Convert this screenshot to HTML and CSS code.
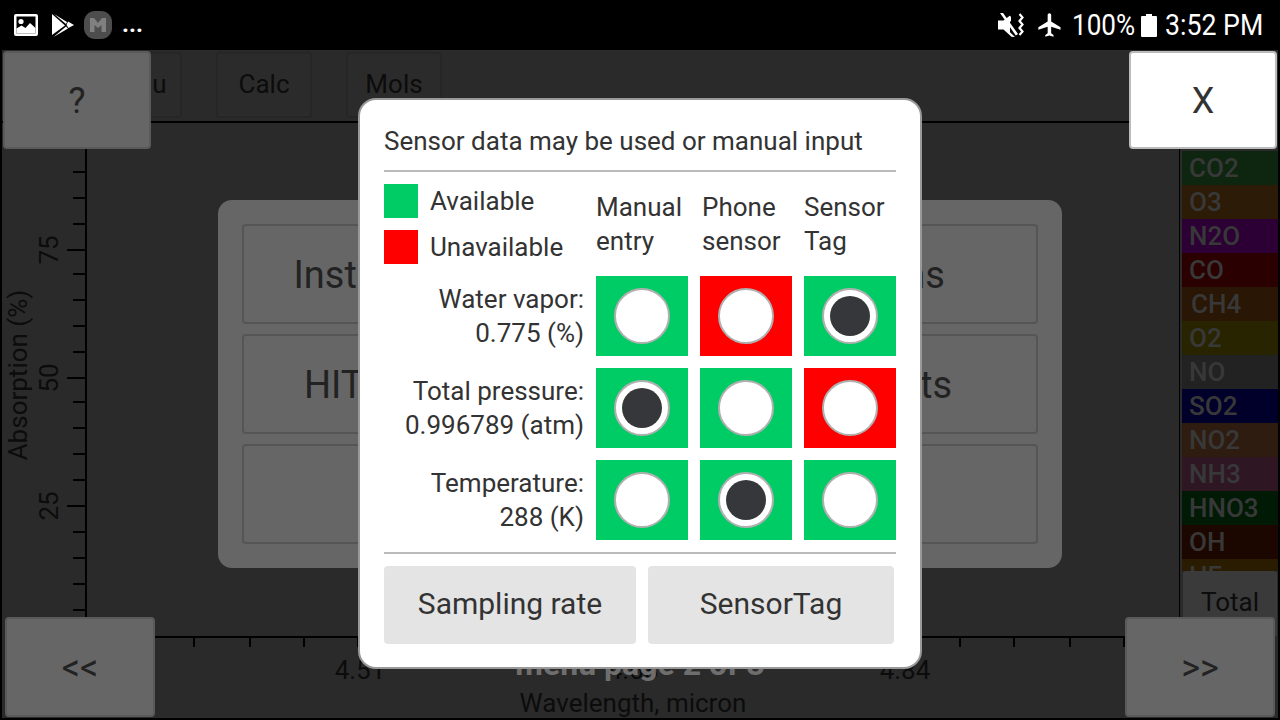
FILE: index.html
```html
<!DOCTYPE html>
<html lang="en">
<head>
    <meta charset="UTF-8">
    <title>Sensor settings</title>
    <link rel="stylesheet" href="styles.css">
</head>
<body>

<div class="screen">

    <!-- status bar -->
    <div class="statusbar">
        <div class="status-left">
            <svg class="icon-gallery" width="24" height="22" viewBox="0 0 24 22">
                <path fill="#fff" fill-rule="evenodd" d="M2 0h20a2 2 0 0 1 2 2v18a2 2 0 0 1-2 2H2a2 2 0 0 1-2-2V2a2 2 0 0 1 2-2zM2.500 2.500v17h19v-17z"/>
                <circle cx="7" cy="7.500" r="2.600" fill="#fff"/>
                <path fill="#fff" d="M2.500 18v-3.500l5-3 4 2.500 4.500-5 5.500 5V19.500h-19z"/>
            </svg>
            <svg class="icon-play" width="22" height="23" viewBox="0 0 22 23">
                <path fill="#fff" d="M0 0l13 11.500L0 21zM1.500 23L16 14.500l-2-2zM2 0l13 8-1 2zM16 7.500l6 3.500-5.500 3-2-3z"/>
            </svg>
            <div class="app-badge">
                <svg width="16" height="14" viewBox="0 0 16 14">
                    <path fill="#808080" d="M0 0h4l4 5 4-5h4v14h-4.500V7L8 10 4.500 7v7H0z"/>
                </svg>
            </div>
            <span class="more">...</span>
        </div>
        <div class="status-right">
            <svg class="icon-mute" width="28" height="24" viewBox="0 0 28 24">
                <path fill="#fff" d="M0 7.500h5.500L12 2.500v16.800l5 4.700-3.500-.2L5.500 16.500H0z"/>
                <path fill="#fff" d="M2 0l2-1.500L20 21l-2.200 1.500zM13 3v6l-3-3.500z"/>
                <path fill="none" stroke="#fff" stroke-width="2.200" d="M21.500 1l3 3.500-3 3.500 3 3.500-3 3.500 3 3.500-3 3.500"/>
            </svg>
            <svg class="icon-plane" width="28" height="28" viewBox="0 0 24 24">
                <path fill="#fff" d="M21 16v-2l-8-5V3.500c0-.83-.67-1.500-1.500-1.500S10 2.670 10 3.500V9l-8 5v2l8-2.500V19l-2 1.500V22l3.500-1 3.500 1v-1.500L13 19v-5.500l8 2.500z"/>
            </svg>
            <span class="pct">100%</span>
            <svg class="icon-battery" width="16" height="23" viewBox="0 0 16 23">
                <path fill="#fff" d="M5 0h6v2h4a1 1 0 0 1 1 1v19a1 1 0 0 1-1 1H1a1 1 0 0 1-1-1V3a1 1 0 0 1 1-1h4z"/>
            </svg>
            <span class="clock">3:52 PM</span>
        </div>
    </div>

    <!-- app behind the dialog, already dimmed -->
    <div class="app">
        <div class="main">
            <div class="tabs">
                <div class="tab">Menu</div>
                <div class="tab">Calc</div>
                <div class="tab">Mols</div>
            </div>
            <svg class="plot" width="1178" height="595" viewBox="2 123 1178 595">
                <path class="axis" d="M86 123V637M86 637H1180M1180 123V637"/>
                <path class="tick" d="M73 172H86M73 198H86M73 224H86M67 250H86M73 274H86M73 300H86M73 326H86M73 352H86M67 378H86M73 402H86M73 428H86M73 454H86M73 480H86M67 506H86M73 532H86M73 558H86M73 584H86M73 610H86"/>
                <path class="tick" d="M194 637V647M250 637V647M304 637V647M358 637V647M960 637V647M1014 637V647M1070 637V647M1124 637V647"/>
                <text class="plot-label" transform="translate(58 250) rotate(-90)">75</text>
                <text class="plot-label" transform="translate(58 378) rotate(-90)">50</text>
                <text class="plot-label" transform="translate(58 506) rotate(-90)">25</text>
                <text class="plot-label" transform="translate(27 375) rotate(-90)">Absorption (%)</text>
                <text class="plot-label" x="360" y="679">4.51</text>
                <text class="plot-label" x="633" y="679">4.68</text>
                <text class="plot-label" x="905" y="679">4.84</text>
                <text class="plot-label" x="633" y="712">Wavelength, micron</text>
                <text class="page-label" x="640" y="675">menu page 2 of 3</text>
            </svg>
        </div>
        <div class="legend">
            <div class="gases">
                <div class="gas gas-co2">CO2</div>
                <div class="gas gas-o3">O3</div>
                <div class="gas gas-n2o">N2O</div>
                <div class="gas gas-co">CO</div>
                <div class="gas gas-ch4">CH4</div>
                <div class="gas gas-o2">O2</div>
                <div class="gas gas-no">NO</div>
                <div class="gas gas-so2">SO2</div>
                <div class="gas gas-no2">NO2</div>
                <div class="gas gas-nh3">NH3</div>
                <div class="gas gas-hno3">HNO3</div>
                <div class="gas gas-oh">OH</div>
                <div class="gas gas-hf">HF</div>
            </div>
            <div class="total">Total</div>
        </div>

        <!-- menu page under the dialog -->
        <div class="menu-panel">
            <div class="menu-btn menu-btn-first">Instructor</div>
            <div class="menu-btn"></div>
            <div class="menu-btn">Ions</div>
            <div class="menu-btn">HITRAN</div>
            <div class="menu-btn"></div>
            <div class="menu-btn">Plots</div>
            <div class="menu-btn"></div>
            <div class="menu-btn"></div>
            <div class="menu-btn"></div>
        </div>

        <div class="corner corner-help">?</div>
        <div class="corner corner-close">X</div>
        <div class="corner corner-prev">&lt;&lt;</div>
        <div class="corner corner-next">&gt;&gt;</div>

        <!-- sensor dialog -->
        <div class="dialog">
            <div class="dialog-title">Sensor data may be used or manual input</div>
            <div class="sensor-grid">
                <div class="key">
                    <div class="key-row"><span class="swatch green"></span>Available</div>
                    <div class="key-row"><span class="swatch red"></span>Unavailable</div>
                </div>
                <div class="col-head">Manual<br>entry</div>
                <div class="col-head col-phone">Phone<br>sensor</div>
                <div class="col-head">Sensor<br>Tag</div>

                <div class="row-label">Water vapor:<br>0.775 (%)</div>
                <div class="cell green"><span class="radio"></span></div>
                <div class="cell red"><span class="radio"></span></div>
                <div class="cell green"><span class="radio checked"></span></div>

                <div class="row-label">Total pressure:<br>0.996789 (atm)</div>
                <div class="cell green"><span class="radio checked"></span></div>
                <div class="cell green"><span class="radio"></span></div>
                <div class="cell red"><span class="radio"></span></div>

                <div class="row-label">Temperature:<br>288 (K)</div>
                <div class="cell green"><span class="radio"></span></div>
                <div class="cell green"><span class="radio checked"></span></div>
                <div class="cell green"><span class="radio"></span></div>
            </div>
            <div class="dialog-buttons">
                <div class="dialog-btn btn-rate">Sampling rate</div>
                <div class="dialog-btn btn-tag">SensorTag</div>
            </div>
        </div>
    </div>
</div>

</body>
</html>
```

FILE: styles.css
```css
body {
    margin: 0;
    background-color: #000;
    font-family: Roboto, "Liberation Sans", sans-serif;
}

.screen {
    width: 1280px;
    height: 720px;
    display: flex;
    flex-direction: column;
    overflow: hidden;
}

/* status bar */
.statusbar {
    height: 50px;
    flex: none;
    display: flex;
    justify-content: space-between;
    align-items: center;
    background-color: #000;
    color: #fff;
}

.status-left {
    display: flex;
    align-items: center;
    padding-left: 14px;
}

.icon-gallery {
    margin-right: 14px;
}

.icon-play {
    margin-right: 10px;
}

.app-badge {
    width: 28px;
    height: 28px;
    border-radius: 11px;
    background-color: #4d4d4d;
    display: flex;
    align-items: center;
    justify-content: center;
}

.more {
    margin-left: 10px;
    padding-bottom: 2px;
    font-size: 24px;
    font-weight: 700;
    line-height: 28px;
}

.status-right {
    display: flex;
    align-items: center;
    padding-right: 17px;
}

.icon-mute {
    margin-right: 10px;
}

.icon-plane {
    margin-right: 8px;
}

/* the phone's status font is narrower than Roboto */
.pct,
.clock {
    padding-bottom: 2px;
    font-size: 30px;
    white-space: nowrap;
    transform-origin: left center;
}

.pct {
    width: 63px;
    margin-right: 6px;
    transform: scaleX(0.87);
}

.icon-battery {
    margin-right: 8px;
}

.clock {
    width: 98px;
    transform: scaleX(0.89);
}

/* app */
.app {
    position: relative;
    flex: 1;
    margin: 0 2px 2px;
    display: flex;
    background-color: #2a2a2a;
}

.main {
    width: 1178px;
    flex: none;
    display: flex;
    flex-direction: column;
}

.tabs {
    height: 73px;
    box-sizing: border-box;
    padding: 2px 0 0 84px;
    display: flex;
    gap: 34px;
    border-bottom: 2px solid #000;
}

.tab {
    width: 96px;
    height: 66px;
    box-sizing: border-box;
    padding-bottom: 2px;
    border: 2px solid #262626;
    border-radius: 3px;
    background-color: #2b2b2b;
    color: #0c0c0c;
    font-size: 26px;
    display: flex;
    align-items: center;
    justify-content: center;
}

.plot {
    display: block;
}

.axis {
    fill: none;
    stroke: #000;
    stroke-width: 2;
}

.tick {
    fill: none;
    stroke: #000;
    stroke-width: 2;
}

.plot-label {
    font-family: Roboto, sans-serif;
    font-size: 26px;
    fill: #0c0c0c;
    text-anchor: middle;
}

.page-label {
    font-family: Roboto, sans-serif;
    font-size: 32px;
    font-weight: 700;
    fill: #6e6e6e;
    text-anchor: middle;
}

/* gas legend */
.legend {
    flex: 1;
    display: flex;
    flex-direction: column;
    margin-left: 2px;
    padding-top: 101px;
}

.gases {
    height: 420px;
    overflow: hidden;
}

.gas {
    height: 34px;
    box-sizing: border-box;
    padding-left: 7px;
    font-size: 26px;
    font-weight: 500;
    line-height: 34px;
    color: #383838;
}

.gas-co2 { background-color: #0e260f; }
.gas-o3 { background-color: #2c1b07; }
.gas-n2o { background-color: #2d0035; }
.gas-co { background-color: #2a0000; }
.gas-ch4 { background-color: #2a1604; padding-left: 9px; }
.gas-o2 { background-color: #282400; }
.gas-no { background-color: #222; }
.gas-so2 { background-color: #00002b; }
.gas-no2 { background-color: #2e1c10; }
.gas-nh3 { background-color: #2e1723; }
.gas-hno3 { background-color: #001a05; }
.gas-oh { background-color: #1c0700; }
.gas-hf { background-color: #2a1c00; }

.total {
    height: 66px;
    margin: 0 1px;
    border-radius: 3px;
    background-color: #3a3a3a;
    color: #0c0c0c;
    font-size: 26px;
    line-height: 62px;
    text-align: center;
}

/* menu page */
.menu-panel {
    position: absolute;
    left: 216px;
    top: 150px;
    width: 844px;
    height: 368px;
    box-sizing: border-box;
    padding: 24px;
    display: grid;
    grid-template-columns: repeat(3, 1fr);
    grid-template-rows: repeat(3, 100px);
    gap: 10px;
    border-radius: 14px;
    background-color: #666;
}

.menu-btn {
    box-sizing: border-box;
    padding-top: 2px;
    border: 2px solid #555;
    border-radius: 4px;
    color: #222;
    font-size: 38px;
    display: flex;
    align-items: center;
    justify-content: center;
}

.menu-btn-first {
    padding-left: 8px;
}

/* corner buttons */
.corner {
    position: absolute;
    box-sizing: border-box;
    padding-top: 2px;
    border: 2px solid #5a5a5a;
    border-radius: 4px;
    background-color: #666;
    color: #222;
    font-size: 36px;
    display: flex;
    align-items: center;
    justify-content: center;
}

.corner-help {
    left: 1px;
    top: 1px;
    width: 148px;
    height: 98px;
}

.corner-close {
    right: 1px;
    top: 1px;
    width: 148px;
    height: 98px;
    background-color: #fff;
    border-color: #bbb;
    color: #333;
}

.corner-prev {
    left: 3px;
    top: 567px;
    width: 150px;
    height: 100px;
}

.corner-next {
    right: 3px;
    top: 567px;
    width: 150px;
    height: 100px;
}

/* dialog */
.dialog {
    position: absolute;
    left: 356px;
    top: 48px;
    width: 564px;
    height: 571px;
    box-sizing: border-box;
    padding: 22px 24px 0;
    border: 2px solid #999;
    border-radius: 18px;
    background-color: #fff;
    color: #333;
    font-size: 26px;
}

.dialog-title {
    height: 48px;
    line-height: 38px;
    border-bottom: 2px solid #bbb;
}

.sensor-grid {
    display: grid;
    grid-template-columns: 200px 92px 92px 92px;
    grid-template-rows: repeat(4, 80px);
    column-gap: 12px;
    row-gap: 12px;
    padding: 12px 0;
    border-bottom: 2px solid #bbb;
}

.key {
    display: flex;
    flex-direction: column;
    gap: 12px;
}

.key-row {
    display: flex;
    align-items: center;
    gap: 12px;
    height: 34px;
}

.swatch {
    width: 34px;
    height: 34px;
}

.green {
    background-color: #00cc66;
}

.red {
    background-color: #ff0000;
}

.col-head {
    padding-top: 6px;
    line-height: 34px;
    white-space: nowrap;
}

.col-phone {
    padding-left: 2px;
}

.row-label {
    text-align: right;
    line-height: 34px;
    padding-top: 6px;
    white-space: nowrap;
}

.cell {
    display: flex;
    align-items: center;
    justify-content: center;
}

.radio {
    width: 56px;
    height: 56px;
    box-sizing: border-box;
    border: 2px solid #b0b0b0;
    border-radius: 50%;
    background-color: #fff;
    display: flex;
    align-items: center;
    justify-content: center;
}

.radio.checked::after {
    content: "";
    width: 40px;
    height: 40px;
    border-radius: 50%;
    background-color: #36373a;
}

.dialog-buttons {
    display: flex;
    gap: 12px;
    padding-top: 12px;
}

.dialog-btn {
    height: 78px;
    box-sizing: border-box;
    padding-bottom: 3px;
    border-radius: 4px;
    background-color: #e4e4e4;
    font-size: 30px;
    display: flex;
    align-items: center;
    justify-content: center;
}

.btn-rate {
    width: 252px;
}

.btn-tag {
    width: 246px;
}
```
